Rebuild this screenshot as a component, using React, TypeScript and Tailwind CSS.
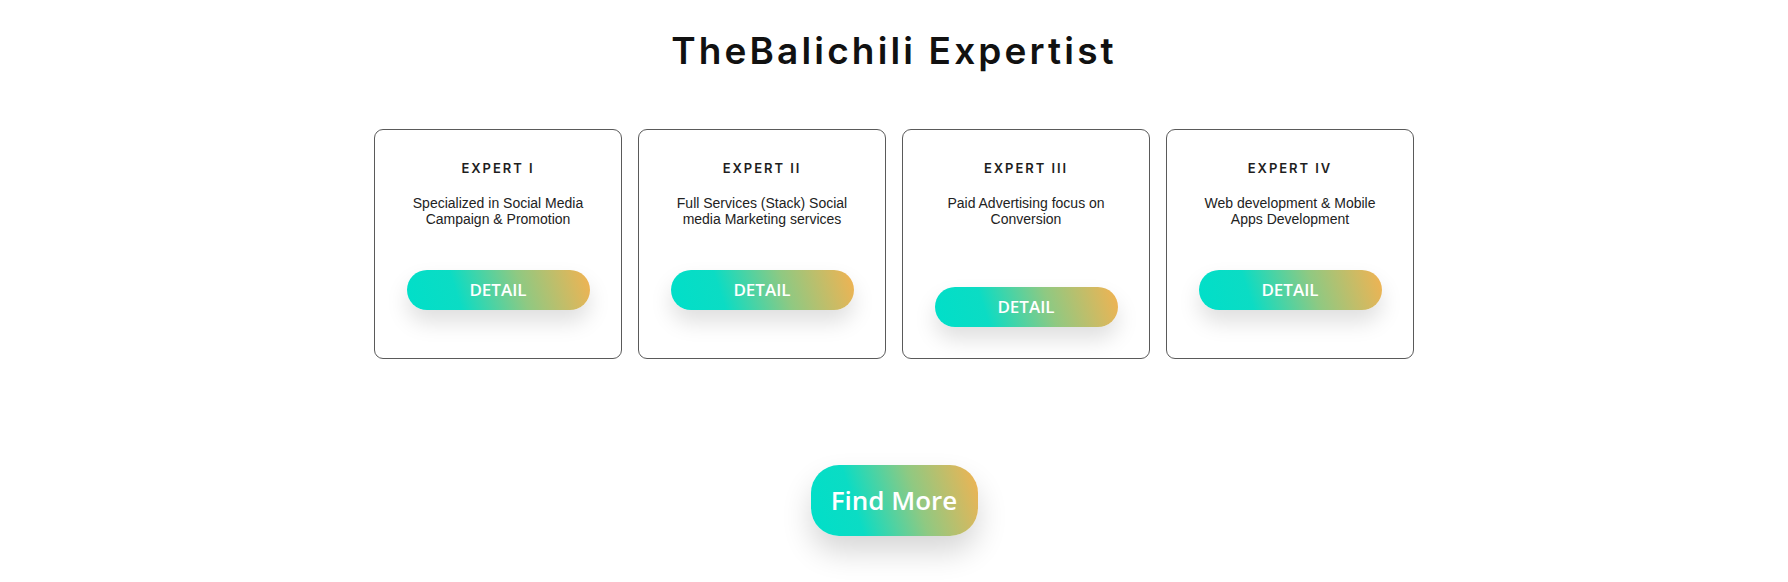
// Expertist section: heading, four expert cards and a call-to-action button.

type Expert = {
  title: string;
  lines: string[];
  // some cards push their button a little lower in the original layout
  lowButton?: boolean;
};

const experts: Expert[] = [
  { title: "EXPERT I", lines: ["Specialized in Social Media", "Campaign & Promotion"] },
  { title: "EXPERT II", lines: ["Full Services (Stack) Social", "media Marketing services"] },
  { title: "EXPERT III", lines: ["Paid Advertising focus on", "Conversion"], lowButton: true },
  { title: "EXPERT IV", lines: ["Web development & Mobile", "Apps Development"] },
];

const gradient =
  "bg-[linear-gradient(72deg,#00dfc9_0%,#0bdcc4_28%,#8fc982_62%,#f3b251_100%)]";

function ExpertCard({ expert }: { expert: Expert }) {
  return (
    <div className="flex h-[230px] w-[248px] flex-col items-center rounded-[9px] border border-[#5a5a5a] bg-white pt-[30px]">
      <h3 className="font-['Inter',sans-serif] text-[13px] font-semibold leading-[16px] tracking-[0.15em] text-[#1e1e1e]">
        {expert.title}
      </h3>
      <p className="mt-[19px] text-center font-['Liberation_Sans',Arial,sans-serif] text-[14px] leading-[16px] text-[#222]">
        {expert.lines.map((line) => (
          <span key={line} className="block whitespace-nowrap">
            {line}
          </span>
        ))}
      </p>
      <button
        className={`${expert.lowButton ? "mt-[60px]" : "mt-[43px]"} ${gradient} flex h-[40px] w-[183px] items-center justify-center rounded-full font-['Open_Sans',sans-serif] text-[17px] font-semibold text-white shadow-[0_12px_22px_rgba(0,0,0,0.13)]`}
      >
        DETAIL
      </button>
    </div>
  );
}

export default function App() {
  return (
    <div className="flex h-[582px] w-full flex-col items-center bg-white pt-[32px]">
      <h1 className="font-['Inter',sans-serif] text-[37px] font-semibold leading-[37px] tracking-[0.085em] text-[#111]">
        TheBalichili Expertist
      </h1>

      <div className="mt-[60px] flex gap-[16px]">
        {experts.map((expert) => (
          <ExpertCard key={expert.title} expert={expert} />
        ))}
      </div>

      <button
        className={`${gradient} mt-[106px] flex h-[71px] w-[167px] items-center justify-center rounded-[28px] font-['Open_Sans',sans-serif] text-[26px] font-semibold text-white shadow-[0_16px_30px_rgba(0,0,0,0.16)]`}
      >
        Find More
      </button>
    </div>
  );
}
